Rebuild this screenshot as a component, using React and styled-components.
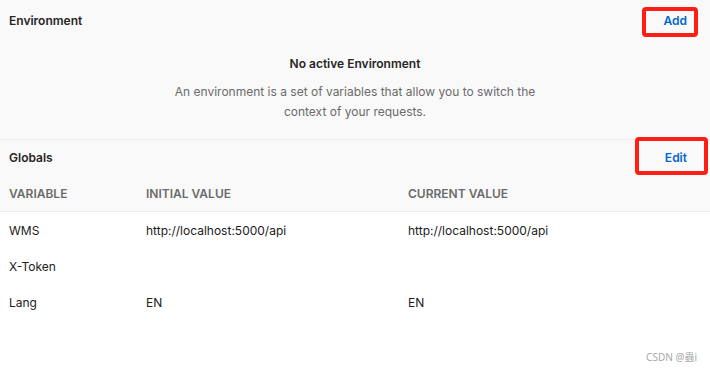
import React from "react";
import styled, { createGlobalStyle } from "styled-components";

const Global = createGlobalStyle`
  html, body { margin: 0; padding: 0; background: #ffffff; }
  body { font-family: Inter, "Noto Sans", sans-serif; -webkit-font-smoothing: antialiased; }
`;

const Page = styled.div`
  position: relative;
  width: 710px;
  height: 374px;
  background: #ffffff;
  color: #212121;
  font-size: 12px;
  overflow: hidden;
`;

const Section = styled.section`
  background: #f9f9f9;
  border-bottom: ${(p) => (p.$flat ? "none" : "1px solid #ededed")};
`;

const SectionHeader = styled.div`
  position: relative;
  display: flex;
  align-items: center;
  justify-content: space-between;
  height: ${(p) => p.$h}px;
  padding: 0 23px 0 9px;
`;

const Title = styled.div`
  font-weight: 600;
  font-size: 12px;
  color: #262626;
`;

const LinkButton = styled.button`
  background: none;
  border: none;
  padding: 0;
  font-family: inherit;
  font-size: 12px;
  font-weight: 600;
  color: #0265d2;
  cursor: pointer;
`;

const Highlight = styled.div`
  position: absolute;
  top: ${(p) => p.$top}px;
  right: ${(p) => p.$right}px;
  width: ${(p) => p.$w}px;
  height: ${(p) => p.$h}px;
  box-sizing: border-box;
  border: 4px solid #ff1e14;
  border-radius: 4px;
  pointer-events: none;
`;

const Empty = styled.div`
  display: flex;
  flex-direction: column;
  align-items: center;
  padding: 14px 0 17px;
  text-align: center;
`;

const EmptyTitle = styled.div`
  font-weight: 600;
  font-size: 12px;
  line-height: 20px;
  color: #262626;
`;

const EmptyText = styled.p`
  margin: 8px 0 0;
  width: 380px;
  font-size: 12px;
  line-height: 20px;
  color: #6b6b6b;
`;

const Row = styled.div`
  display: grid;
  grid-template-columns: 137px 262px 1fr;
  align-items: center;
  height: ${(p) => p.$h}px;
  padding-left: 9px;
`;

const HeadRow = styled(Row)`
  background: #f9f9f9;
  border-bottom: 1px solid #ededed;
`;

const HeadCell = styled.div`
  font-weight: 600;
  font-size: 12px;
  color: #6b6b6b;
  text-transform: uppercase;
`;

const Cell = styled.div`
  font-size: 12px;
  color: #212121;
`;

const Watermark = styled.div`
  position: absolute;
  right: 13px;
  bottom: 10px;
  font-family: "Noto Sans", "Noto Sans CJK SC", sans-serif;
  font-size: 10px;
  color: #a8a8a8;
`;

const rows = [
  ["WMS", "http://localhost:5000/api", "http://localhost:5000/api"],
  ["X-Token", "", ""],
  ["Lang", "EN", "EN"],
];

export default function App() {
  return (
    <Page>
      <Global />
      <Section>
        <SectionHeader $h={40}>
          <Title>Environment</Title>
          <LinkButton>Add</LinkButton>
          <Highlight $top={7} $right={12} $w={56} $h={30} />
        </SectionHeader>
        <Empty>
          <EmptyTitle>No active Environment</EmptyTitle>
          <EmptyText>
            An environment is a set of variables that allow you to switch the
            context of your requests.
          </EmptyText>
        </Empty>
      </Section>
      <div>
        <Section $flat>
          <SectionHeader $h={35}>
            <Title>Globals</Title>
            <LinkButton>Edit</LinkButton>
            <Highlight $top={-3} $right={2} $w={73} $h={38} />
          </SectionHeader>
        </Section>
        <HeadRow $h={36}>
          <HeadCell>Variable</HeadCell>
          <HeadCell>Initial value</HeadCell>
          <HeadCell>Current value</HeadCell>
        </HeadRow>
        {rows.map((r) => (
          <Row key={r[0]} $h={36}>
            <Cell>{r[0]}</Cell>
            <Cell>{r[1]}</Cell>
            <Cell>{r[2]}</Cell>
          </Row>
        ))}
      </div>
      <Watermark>CSDN @蟲i</Watermark>
    </Page>
  );
}
